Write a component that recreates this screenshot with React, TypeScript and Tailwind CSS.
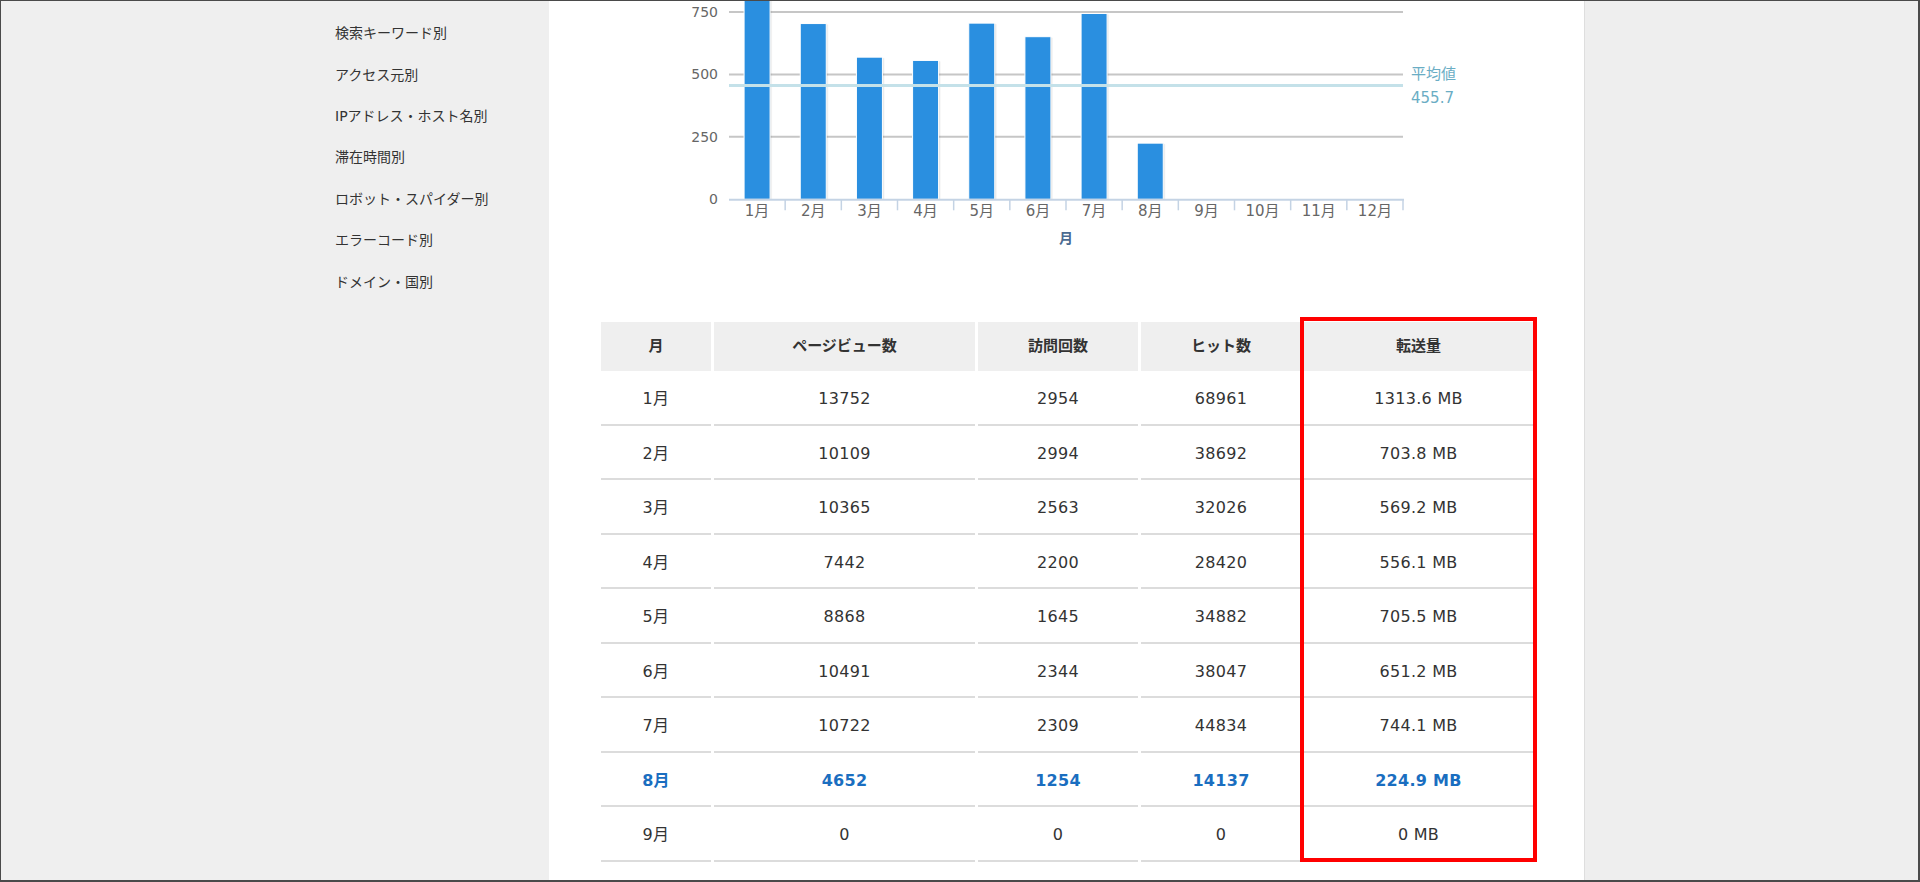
import React from 'react';

const FONT = "font-['DejaVu_Sans','Noto_Sans_CJK_JP',sans-serif]";

const SIDE_LINKS = [
  '検索キーワード別',
  'アクセス元別',
  'IPアドレス・ホスト名別',
  '滞在時間別',
  'ロボット・スパイダー別',
  'エラーコード別',
  'ドメイン・国別',
];

const MONTHS = ['1月', '2月', '3月', '4月', '5月', '6月', '7月', '8月', '9月', '10月', '11月', '12月'];

// transfer volume per month (MB), used by the chart
const TRANSFER = [1313.6, 703.8, 569.2, 556.1, 705.5, 651.2, 744.1, 224.9];

type Row = { month: string; pv: number; visits: number; hits: number; mb: string; current?: boolean };

const ROWS: Row[] = [
  { month: '1月', pv: 13752, visits: 2954, hits: 68961, mb: '1313.6 MB' },
  { month: '2月', pv: 10109, visits: 2994, hits: 38692, mb: '703.8 MB' },
  { month: '3月', pv: 10365, visits: 2563, hits: 32026, mb: '569.2 MB' },
  { month: '4月', pv: 7442, visits: 2200, hits: 28420, mb: '556.1 MB' },
  { month: '5月', pv: 8868, visits: 1645, hits: 34882, mb: '705.5 MB' },
  { month: '6月', pv: 10491, visits: 2344, hits: 38047, mb: '651.2 MB' },
  { month: '7月', pv: 10722, visits: 2309, hits: 44834, mb: '744.1 MB' },
  { month: '8月', pv: 4652, visits: 1254, hits: 14137, mb: '224.9 MB', current: true },
  { month: '9月', pv: 0, visits: 0, hits: 0, mb: '0 MB' },
];

const HEADERS = ['月', 'ページビュー数', '訪問回数', 'ヒット数', '転送量'];

const Sidebar = () => (
  <nav className="w-[548px] shrink-0 pl-[334px] pt-[12px] flex flex-col">
    {SIDE_LINKS.map(label => (
      <a key={label} className="h-[41.4px] flex items-center text-[14px] text-[#333] cursor-pointer">
        {label}
      </a>
    ))}
  </nav>
);

// chart geometry, in svg coordinates
const PLOT_L = 180;
const PLOT_R = 854;
const ZERO_Y = 198.3;
const PX_PER_UNIT = 62.43 / 250;
const CAT_W = (PLOT_R - PLOT_L) / 12;
const AVG = 455.7;

const yOf = (v: number) => ZERO_Y - v * PX_PER_UNIT;

const BarChart = () => (
  <svg width="1035" height="321" className="block" fontFamily="'DejaVu Sans','Noto Sans CJK JP',sans-serif">
    {[750, 500, 250].map(v => (
      <line key={v} x1={PLOT_L} x2={PLOT_R} y1={yOf(v)} y2={yOf(v)} stroke="#c6c6c6" strokeWidth="2" />
    ))}
    {[750, 500, 250, 0].map(v => (
      <text key={v} x="169" y={yOf(v)} textAnchor="end" dominantBaseline="central" fontSize="14" fill="#666">
        {v}
      </text>
    ))}

    {TRANSFER.map((v, i) => {
      const cx = PLOT_L + (i + 0.5) * CAT_W;
      const top = yOf(v);
      return (
        <g key={i}>
          <rect x={cx - 11} y={top + 1} width="26" height={ZERO_Y - top - 1} fill="#000" opacity="0.05" />
          <rect x={cx - 12} y={top + 0.5} width="26" height={ZERO_Y - top - 0.5} fill="#000" opacity="0.07" />
          <rect x={cx - 13} y={top} width="26" height={ZERO_Y - top} fill="#2a8fe0" stroke="#ffffff" strokeWidth="1" />
        </g>
      );
    })}

    <line x1={PLOT_L} x2={PLOT_R} y1={yOf(AVG)} y2={yOf(AVG)} stroke="#c4e1e9" strokeWidth="3" />
    <text x="862" y="73" dominantBaseline="central" fontSize="15" fill="#6aadc4">平均値</text>
    <text x="862" y="97" dominantBaseline="central" fontSize="15" fill="#6aadc4">455.7</text>

    <line x1={PLOT_L} x2={PLOT_R + 1} y1={ZERO_Y + 0.5} y2={ZERO_Y + 0.5} stroke="#c4d3e4" strokeWidth="2" />
    {MONTHS.map((m, i) => (
      <line key={m} x1={PLOT_L + (i + 1) * CAT_W} x2={PLOT_L + (i + 1) * CAT_W} y1={ZERO_Y} y2={ZERO_Y + 11} stroke="#c4d3e4" strokeWidth="1.5" />
    ))}
    {MONTHS.map((m, i) => (
      <text key={m} x={PLOT_L + (i + 0.5) * CAT_W} y="209.7" textAnchor="middle" dominantBaseline="central" fontSize="15" fill="#666">
        {m}
      </text>
    ))}
    <text x="517" y="236.5" textAnchor="middle" dominantBaseline="central" fontSize="14" fontWeight="bold" fill="#4b6b91">
      月
    </text>
  </svg>
);

const COLS = 'grid grid-cols-[110px_261px_160px_160px_229px] gap-x-[3px]';

const StatsTable = () => (
  <div className="relative ml-[52px] w-[932px]">
    <div className={COLS}>
      {HEADERS.map(h => (
        <div key={h} className="h-[49px] bg-[#efefef] flex items-center justify-center text-[15px] font-bold text-[#333]">
          {h}
        </div>
      ))}
    </div>
    {ROWS.map(r => {
      const cells = [r.month, r.pv, r.visits, r.hits, r.mb];
      return (
        <div key={r.month} className={COLS}>
          {cells.map((c, i) => (
            <div
              key={i}
              className={`h-[54.5px] pt-[4px] border-b-2 border-[#dcdcdc] flex items-center justify-center text-[16px] tracking-[0.3px] ${
                r.current ? 'font-bold text-[#1a6ec0]' : 'text-[#333]'
              }`}
            >
              {c}
            </div>
          ))}
        </div>
      );
    })}
    {/* highlight around the transfer column */}
    <div className="absolute left-[699px] top-[-5px] w-[237px] h-[545px] border-4 border-[#ff0000] pointer-events-none" />
  </div>
);

export default function App() {
  return (
    <div className={`${FONT} w-[1920px] h-[882px] overflow-hidden flex bg-[#efefef] border-l border-t border-r-2 border-b-2 border-[#4a4a4a]`}>
      <Sidebar />
      <main className="w-[1036px] shrink-0 bg-white border-r border-[#dedede]">
        <BarChart />
        <StatsTable />
      </main>
      <div className="flex-1 bg-[#eeeeee]" />
    </div>
  );
}
